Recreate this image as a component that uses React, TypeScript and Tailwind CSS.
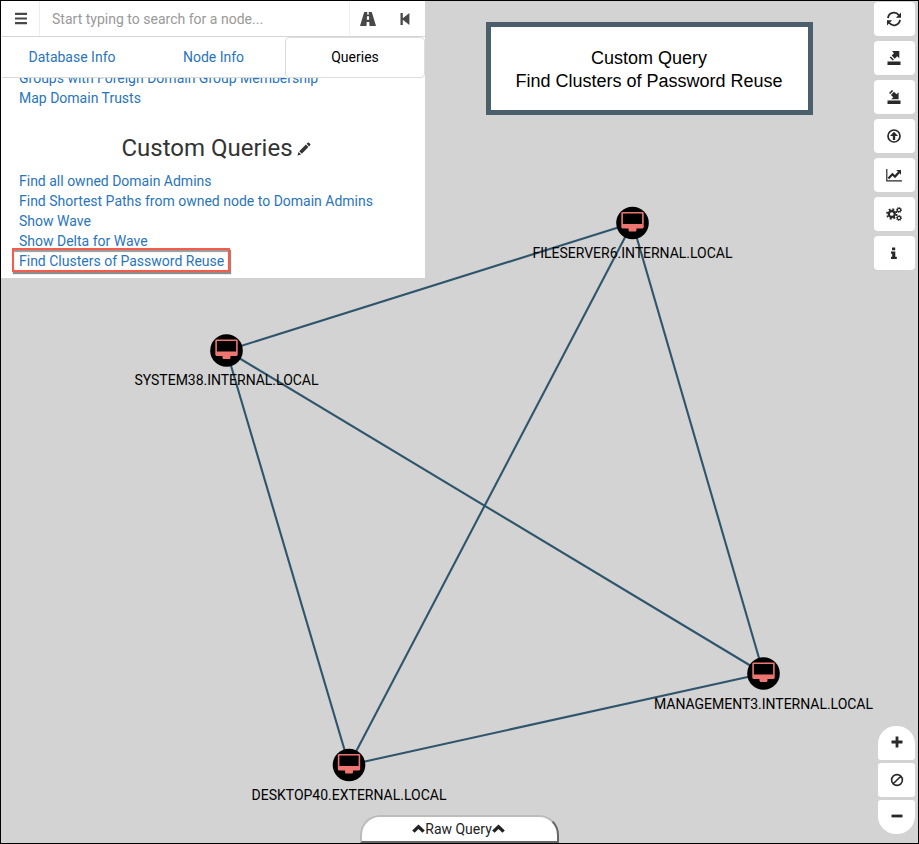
import type { ReactNode } from "react";

type IconProps = { className?: string; children: ReactNode; box?: string };

function Icon({ className = "", children, box = "0 0 16 16" }: IconProps) {
  return (
    <svg viewBox={box} className={`block shrink-0 ${className}`} fill="currentColor" aria-hidden="true">
      {children}
    </svg>
  );
}

const nodes = [
  { x: 632.5, y: 223, labelY: 258, label: "FILESERVER6.INTERNAL.LOCAL", width: 200 },
  { x: 226.5, y: 350.5, labelY: 385, label: "SYSTEM38.INTERNAL.LOCAL", width: 184 },
  { x: 763.5, y: 673.5, labelY: 709, label: "MANAGEMENT3.INTERNAL.LOCAL", width: 219 },
  { x: 349, y: 765, labelY: 800, label: "DESKTOP40.EXTERNAL.LOCAL", width: 195 },
];

const edges = [[0, 1], [0, 2], [0, 3], [1, 2], [1, 3], [2, 3]];

function Graph() {
  return (
    <svg viewBox="0 0 919 844" className="absolute left-0 top-0 h-[844px] w-[919px]">
      <g stroke="#2e556b" strokeWidth="2.1">
        {edges.map(([a, b]) => (
          <line key={`${a}-${b}`} x1={nodes[a].x} y1={nodes[a].y} x2={nodes[b].x} y2={nodes[b].y} />
        ))}
      </g>
      {nodes.map((n) => (
        <g key={n.label}>
          <circle cx={n.x} cy={n.y} r="16.3" fill="#000" />
          <g transform={`translate(${n.x} ${n.y})`} fill="#ed7770">
            <path
              fillRule="evenodd"
              d="M-10-11H10Q11.2-11 11.2-9.8V4Q11.2 5.4 10 5.4H4V7.4H3.6V8.6H-3.6V7.4H-4V5.4H-10Q-11.2 5.4-11.2 4V-9.8Q-11.2-11-10-11ZM-9.6-9.6V1H9.6V-9.6Z"
            />
          </g>
          <text
            x={n.x}
            y={n.labelY}
            textAnchor="middle"
            textLength={n.width}
            className="fill-black font-[Roboto,sans-serif] text-[14px]"
          >
            {n.label}
          </text>
        </g>
      ))}
    </svg>
  );
}

const queries = [
  "Find all owned Domain Admins",
  "Find Shortest Paths from owned node to Domain Admins",
  "Show Wave",
  "Show Delta for Wave",
];

function SearchPanel() {
  return (
    <section className="flex h-[277px] w-[424px] shrink-0 flex-col overflow-hidden bg-white pl-px text-[14px] leading-5">
      <div className="flex h-9 shrink-0 items-center border-b border-[#d5d5d5]">
        <div className="flex h-full w-[38px] items-center justify-center border-r border-[#eeeeee] text-[#484848]">
          <Icon className="h-[14px] w-[14px]" box="0 0 14 14">
            <path d="M1 .8H13V3H1ZM1 5.4H13V7.6H1ZM1 10H13V12.2H1Z" />
          </Icon>
        </div>
        <div className="flex-1 pl-3 tracking-[0.01px] text-[#999999]">Start typing to search for a node...</div>
        <div className="flex h-full w-[76px] items-center border-l border-[#f0f0f0] text-[#484848]">
          <Icon className="ml-[10px] h-4 w-4">
            <path fillRule="evenodd" d="M4.2 1H7.3L7.1 3.4H8.9L8.7 1H11.8L16 15H9.5L9.3 11H6.7L6.5 15H0ZM7 5.3 6.8 8.8H9.2L9 5.3Z" />
          </Icon>
          <Icon className="ml-[21px] h-4 w-4">
            <path d="M3.5 2H5.8V7.2L12.4 2V14L5.8 8.8V14H3.5Z" />
          </Icon>
        </div>
      </div>
      <div className="flex h-[41px] shrink-0 text-[#2a75ba]">
        <div className="flex w-[141px] items-center justify-center border-b border-[#d9d9d9] pr-px">Database Info</div>
        <div className="flex w-[142px] items-center justify-center border-b border-[#d9d9d9] pr-px">Node Info</div>
        <div className="flex flex-1 items-center justify-center rounded border border-[#dddddd] pb-px text-black">Queries</div>
      </div>
      <div className="flex min-h-0 flex-1 flex-col justify-end overflow-hidden pb-[6px] text-[#2a75ba]">
        <div className="shrink-0 pl-[17px]">Groups with Foreign Domain Group Membership</div>
        <div className="shrink-0 pl-[17px]">Map Domain Trusts</div>
        <h3 className="mb-[10px] mt-[26px] flex h-[27px] shrink-0 items-center justify-center gap-[4px] pl-[5px] text-[24px] text-[#333333]">
          Custom Queries
          <Icon className="mt-[2px] h-[14px] w-[14px]">
            <path d="M.5 15.5 1.8 11.3 4.7 14.2ZM2.6 10.5 10.2 2.9 13.1 5.8 5.5 13.4ZM11 2.1 12.2.9Q13 .1 13.8.9L15.1 2.2Q15.9 3 15.1 3.8L13.9 5Z" />
          </Icon>
        </h3>
        {queries.map((q) => (
          <div key={q} className="shrink-0 pl-[17px]">{q}</div>
        ))}
        <div className="-mt-[3px] ml-[10px] h-6 w-[218px] shrink-0 border-2 border-[#f45d4c] pl-[5px] leading-[22px] shadow-[1px_2px_1px_rgba(0,0,0,.45),inset_0_2px_1px_rgba(0,0,0,.4)]">
          Find Clusters of Password Reuse
        </div>
      </div>
    </section>
  );
}

const tools: ReactNode[] = [
  <g key="refresh">
    <path d="M2 7.1A6 6 0 0 1 12.8 4.2M14 8.9A6 6 0 0 1 3.2 11.8" fill="none" stroke="currentColor" strokeWidth="1.8" />
    <path d="M15 1.6V6.7H9.9ZM1 14.4V9.3H6.1Z" />
  </g>,
  <path key="export" d="M1.5 11.5H14.5V15H1.5ZM6 1H13.3V8.3L11.2 6.3 8.8 8.7 5.7 5.6 8 3.2ZM4.8 6.4 7.9 9.5 6.8 10.5 3.7 7.4Z" />,
  <path key="import" d="M1.5 11.5H14.5V15H1.5ZM12.6 3.2V10.3H5.2L7.3 8.3 4.9 5.9 8 2.8 10.5 5.2ZM4.2 5.1 3 3.9 6 .9 7.2 2.1Z" />,
  <g key="upload">
    <circle cx="8" cy="8" r="6" fill="none" stroke="currentColor" strokeWidth="1.7" />
    <path d="M8 3.7 12 8.1H9.2V12H6.8V8.1H4Z" />
  </g>,
  <g key="chart">
    <path d="M.8 2V13.8H16" fill="none" stroke="currentColor" strokeWidth="1.2" />
    <path d="m2.4 11.4 4-4.2 2.6 2.4 4-4.4" fill="none" stroke="currentColor" strokeWidth="2.2" />
    <path d="M10.2 3H15V7.8Z" />
  </g>,
  <g key="cogs" fill="none" stroke="currentColor">
    <circle cx="5.8" cy="8" r="3" strokeWidth="2.3" />
    <circle cx="5.8" cy="8" r="4.8" strokeWidth="1.8" strokeDasharray="1.9 1.87" />
    <circle cx="13" cy="4" r="1.7" strokeWidth="1.2" />
    <circle cx="13" cy="4" r="2.6" strokeWidth="1" strokeDasharray="1.1 .94" />
    <circle cx="13" cy="12" r="1.7" strokeWidth="1.2" />
    <circle cx="13" cy="12" r="2.6" strokeWidth="1" strokeDasharray="1.1 .94" />
  </g>,
  <path key="info" d="M6 2.6H9.2V5.3H6ZM5 6.6H9.3V11.8H10.8V13.9H5V11.8H6.2V8.7H5Z" />,
];

function Sidebar() {
  return (
    <aside className="ml-auto mr-[3px] flex flex-col items-end justify-between pb-[9px] pt-px text-[#292929]">
      <div className="flex flex-col gap-[5px]">
        {tools.map((icon, i) => (
          <button key={i} className="flex h-[34px] w-[41px] items-center justify-center rounded bg-white pr-px">
            <Icon className="h-4 w-4">{icon}</Icon>
          </button>
        ))}
      </div>
      <div className="flex flex-col gap-[3px]">
        <button className="flex h-[34px] w-[37px] items-center justify-center rounded-b-[3px] rounded-t-[18px] bg-white pb-[2px]">
          <Icon className="h-4 w-4"><path d="M6.6 2.5H9.4V6.6H13.5V9.4H9.4V13.5H6.6V9.4H2.5V6.6H6.6Z" /></Icon>
        </button>
        <button className="flex h-[34px] w-[37px] items-center justify-center rounded-[3px] bg-white">
          <Icon className="h-4 w-4">
            <path d="M4.2 11.8 11.8 4.2M13.4 8A5.4 5.4 0 1 1 2.6 8A5.4 5.4 0 1 1 13.4 8" fill="none" stroke="currentColor" strokeWidth="1.6" />
          </Icon>
        </button>
        <button className="flex h-[34px] w-[37px] items-center justify-center rounded-b-[18px] rounded-t-[3px] bg-white pb-[2px]">
          <Icon className="h-4 w-4"><path d="M2.5 6.6H13.5V9.4H2.5Z" /></Icon>
        </button>
      </div>
    </aside>
  );
}

function Chevron() {
  return (
    <Icon className="h-[14px] w-[13px]" box="0 0 13 14">
      <path d="M6.5 2.4 12.8 8.4 10.4 10.8 6.5 7.1 2.6 10.8.2 8.4Z" />
    </Icon>
  );
}

export default function App() {
  return (
    <main className="relative flex h-[844px] w-[919px] overflow-hidden border border-black bg-[#d3d3d3] font-[Roboto,sans-serif]">
      <div className="absolute -left-px -top-px">
        <Graph />
      </div>
      <div className="relative flex w-full items-stretch">
        <SearchPanel />
        <div className="ml-[61px] mt-[21px] flex h-[93px] w-[327px] flex-col items-center justify-center border-[5px] border-[#4a5e6b] bg-white pr-px pt-[2px] font-['Liberation_Sans',sans-serif] text-[18px] leading-[23px] text-black">
          <div>Custom Query</div>
          <div>Find Clusters of Password Reuse</div>
        </div>
        <Sidebar />
      </div>
      <div className="absolute bottom-0 left-[359px] flex h-[28px] w-[199px] items-center justify-center rounded-t-[20px] border-2 border-[#bcbcbc] border-b-[#666666] border-r-[#666666] bg-white pr-[2px] text-[14px] text-[#222222]">
        <Chevron />
        <span>Raw Query</span>
        <Chevron />
      </div>
    </main>
  );
}
